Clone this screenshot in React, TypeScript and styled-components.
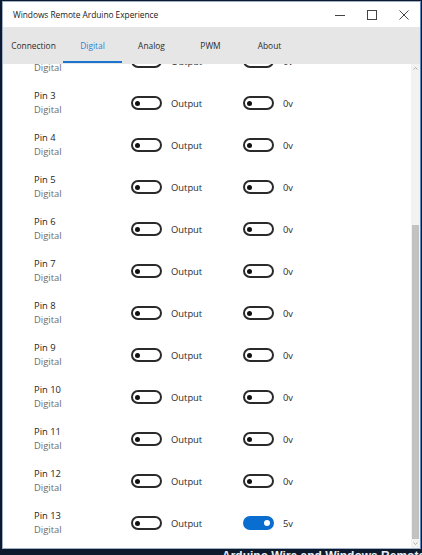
import React from "react";
import styled, { createGlobalStyle, css } from "styled-components";

const GlobalStyle = createGlobalStyle`
  html, body { margin: 0; padding: 0; background: #0d1a2e; }
  body { font-family: "Open Sans", "Noto Sans", sans-serif; }
`;

const Screen = styled.div`
  width: 422px;
  height: 555px;
  overflow: hidden;
  display: flex;
  flex-direction: column;
  background: #0d1a2e;
`;

const Window = styled.div`
  margin: 1px 0 0 2px;
  width: 419px;
  height: 548px;
  box-sizing: border-box;
  border: 1px solid #9db0c8;
  border-right-color: #5f86b8;
  background: #ffffff;
  display: flex;
  flex-direction: column;
`;

const TitleBar = styled.div`
  height: 25px;
  flex: none;
  display: flex;
  align-items: center;
  padding-left: 10px;
  background: #ffffff;
`;

const Title = styled.div`
  flex: 1;
  font-size: 8.4px;
  color: #1a1a1a;
  letter-spacing: -0.05px;
`;

const WinButton = styled.div`
  width: 32px;
  height: 25px;
  display: flex;
  align-items: center;
  justify-content: center;
`;

const TabBar = styled.div`
  height: 37px;
  flex: none;
  display: flex;
  padding-left: 1px;
  background: #e6e6e6;
`;

const Tab = styled.div<{ $active?: boolean }>`
  width: 59px;
  position: relative;
  display: flex;
  align-items: center;
  justify-content: center;
  font-size: 8.4px;
  color: ${(p) => (p.$active ? "#2f80d8" : "#2b2b2b")};
  ${(p) =>
    p.$active &&
    css`
      &::after {
        content: "";
        position: absolute;
        left: 0;
        right: 0;
        bottom: 1px;
        height: 2px;
        background: #1a73cf;
      }
    `}
`;

const Body = styled.div`
  flex: 1;
  display: flex;
  overflow: hidden;
`;

const List = styled.div`
  flex: 1;
  overflow: hidden;
`;

const ListInner = styled.div`
  margin-top: -24px;
`;

const Row = styled.div`
  height: 42px;
  display: flex;
  align-items: center;
  padding-left: 31px;
`;

const PinInfo = styled.div`
  width: 97px;
  display: flex;
  flex-direction: column;
`;

const PinName = styled.div`
  font-size: 9.4px;
  line-height: 14px;
  color: #262626;
`;

const PinKind = styled.div`
  font-size: 9.4px;
  line-height: 14px;
  color: #6b6b6b;
`;

const ToggleGroup = styled.div<{ $width: number }>`
  width: ${(p) => p.$width}px;
  display: flex;
  align-items: center;
`;

const Toggle = styled.div<{ $on?: boolean }>`
  width: 31px;
  height: 14px;
  box-sizing: border-box;
  border-radius: 7px;
  border: 2px solid ${(p) => (p.$on ? "#0a6ed1" : "#2a2a2a")};
  background: ${(p) => (p.$on ? "#0a6ed1" : "#ffffff")};
  display: flex;
  align-items: center;
  justify-content: ${(p) => (p.$on ? "flex-end" : "flex-start")};
  padding: 0 2px;
  flex: none;
`;

const Knob = styled.div<{ $on?: boolean }>`
  width: ${(p) => (p.$on ? 6 : 5)}px;
  height: ${(p) => (p.$on ? 6 : 5)}px;
  border-radius: 50%;
  background: ${(p) => (p.$on ? "#ffffff" : "#111111")};
`;

const ToggleText = styled.div<{ $gap: number }>`
  margin-left: ${(p) => p.$gap}px;
  font-size: 9.4px;
  color: #2b2b2b;
`;

const ScrollBar = styled.div`
  width: 9px;
  flex: none;
  display: flex;
  flex-direction: column;
  background: #f2f2f2;
`;

const Arrow = styled.div`
  height: 9px;
  flex: none;
  display: flex;
  align-items: center;
  justify-content: center;
`;

const Track = styled.div`
  flex: 1;
  display: flex;
  flex-direction: column;
  justify-content: flex-end;
`;

const Thumb = styled.div`
  height: 314px;
  margin: 0 1px;
  background: #c2c2c2;
`;

const Desktop = styled.div`
  height: 6px;
  overflow: hidden;
  padding-left: 222px;
  font-family: "Liberation Sans", sans-serif;
  font-size: 12px;
  font-weight: bold;
  line-height: 12px;
  color: #e8eef5;
  white-space: nowrap;
`;

const DesktopText = styled.div`
  margin-top: 1px;
`;

const pins = [2, 3, 4, 5, 6, 7, 8, 9, 10, 11, 12, 13];

function Switch({ on }: { on?: boolean }) {
  return (
    <Toggle $on={on}>
      <Knob $on={on} />
    </Toggle>
  );
}

export default function App() {
  return (
    <>
      <GlobalStyle />
      <Screen>
        <Window>
          <TitleBar>
            <Title>Windows Remote Arduino Experience</Title>
            <WinButton>
              <svg width="10" height="10" viewBox="0 0 10 10">
                <line x1="0" y1="5.5" x2="10" y2="5.5" stroke="#444" strokeWidth="1" />
              </svg>
            </WinButton>
            <WinButton>
              <svg width="10" height="10" viewBox="0 0 10 10">
                <rect x="0.5" y="0.5" width="9" height="9" fill="none" stroke="#444" strokeWidth="1" />
              </svg>
            </WinButton>
            <WinButton>
              <svg width="10" height="10" viewBox="0 0 10 10">
                <path d="M0.5 0.5 L9.5 9.5 M9.5 0.5 L0.5 9.5" stroke="#444" strokeWidth="1" />
              </svg>
            </WinButton>
          </TitleBar>
          <TabBar>
            <Tab>Connection</Tab>
            <Tab $active>Digital</Tab>
            <Tab>Analog</Tab>
            <Tab>PWM</Tab>
            <Tab>About</Tab>
          </TabBar>
          <Body>
            <List>
              <ListInner>
                {pins.map((n) => (
                  <Row key={n}>
                    <PinInfo>
                      <PinName>Pin {n}</PinName>
                      <PinKind>Digital</PinKind>
                    </PinInfo>
                    <ToggleGroup $width={112}>
                      <Switch />
                      <ToggleText $gap={9}>Output</ToggleText>
                    </ToggleGroup>
                    <ToggleGroup $width={60}>
                      <Switch on={n === 13} />
                      <ToggleText $gap={9}>{n === 13 ? "5v" : "0v"}</ToggleText>
                    </ToggleGroup>
                  </Row>
                ))}
              </ListInner>
            </List>
            <ScrollBar>
              <Arrow>
                <svg width="5" height="3" viewBox="0 0 5 3">
                  <path d="M0.5 2.5 L2.5 0.5 L4.5 2.5" fill="none" stroke="#9a9a9a" strokeWidth="0.8" />
                </svg>
              </Arrow>
              <Track>
                <Thumb />
              </Track>
              <Arrow>
                <svg width="5" height="3" viewBox="0 0 5 3">
                  <path d="M0.5 0.5 L2.5 2.5 L4.5 0.5" fill="none" stroke="#9a9a9a" strokeWidth="0.8" />
                </svg>
              </Arrow>
            </ScrollBar>
          </Body>
        </Window>
        <Desktop>
          <DesktopText>Arduino Wire and Windows Remote</DesktopText>
        </Desktop>
      </Screen>
    </>
  );
}
